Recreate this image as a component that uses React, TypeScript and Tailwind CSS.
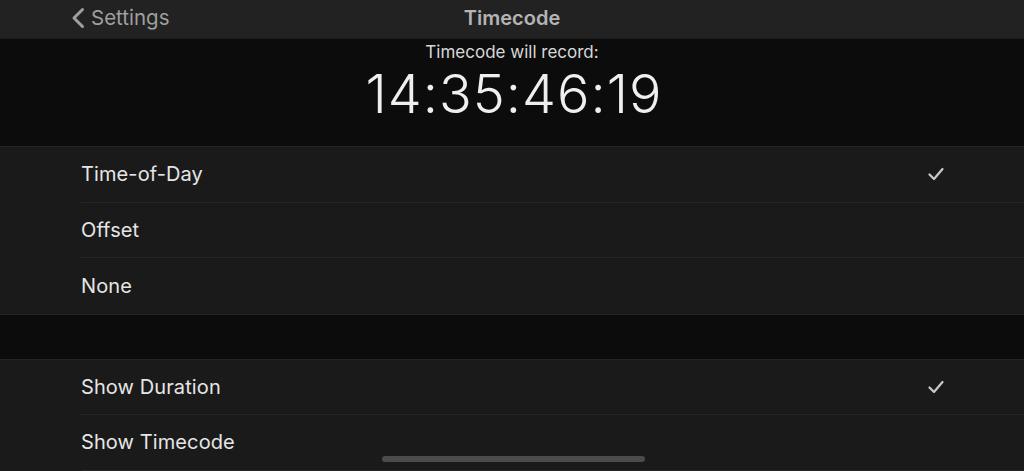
import React from "react";

const font = { fontFamily: "Inter, Roboto, 'Liberation Sans', sans-serif" };

function Check() {
  return (
    <svg width="16" height="14" viewBox="0 0 16 14" fill="none">
      <path d="M1.5 7.5 L6 12 L14.5 2" stroke="#c9c9c9" strokeWidth="2.2" strokeLinecap="round" strokeLinejoin="round" />
    </svg>
  );
}

function Row({ label, checked, last }: { label: string; checked?: boolean; last?: boolean }) {
  return (
    <div className="bg-[#1a1a1a] pl-[81px]">
      <div className={`flex h-[55.5px] items-center pr-[80px] ${last ? "" : "border-b border-[#262626]"}`}>
        <span className="flex-1 text-[20px] text-[#e6e6e6] tracking-[0.1px]">{label}</span>
        {checked && <Check />}
      </div>
    </div>
  );
}

export default function App() {
  return (
    <div style={font} className="relative h-[471px] w-[1024px] overflow-hidden bg-[#0c0c0c]">
      {/* navigation bar */}
      <div className="relative flex h-[39px] items-center border-b border-[#1c1c1c] bg-[#222222]">
        <div className="flex items-center pl-[70px] pb-[2px] text-[#9f9f9f]">
          <svg width="16" height="22" viewBox="0 0 16 22" fill="none">
            <path d="M12.5 2.5 L4 11 L12.5 19.5" stroke="#9f9f9f" strokeWidth="3" strokeLinecap="round" strokeLinejoin="round" />
          </svg>
          <span className="ml-[5px] text-[20.5px]">Settings</span>
        </div>
        <div className="pointer-events-none absolute inset-x-0 pb-[2px] text-center text-[20px] font-semibold text-[#b4b4b4]">
          Timecode
        </div>
      </div>

      {/* current timecode */}
      <div className="flex h-[107px] flex-col items-center bg-[#0c0c0c] pt-[3px]">
        <div className="text-[17px] leading-[20px] text-[#d8d8d8]">Timecode will record:</div>
        <div className="mt-[1px] pl-[4px] text-[54px] font-light leading-[62px] tracking-[1px] text-[#efefef]">
          14:35:46:19
        </div>
      </div>

      {/* source options */}
      <div className="border-t border-[#242424]">
        <Row label="Time-of-Day" checked />
        <Row label="Offset" />
        <Row label="None" last />
      </div>

      <div className="h-[45px] border-t border-[#242424] bg-[#0c0c0c]" />

      {/* display options */}
      <div className="border-t border-[#242424]">
        <Row label="Show Duration" checked />
        <Row label="Show Timecode" />
      </div>

      {/* home indicator */}
      <div className="absolute bottom-[9px] left-[382px] h-[6px] w-[263px] rounded-full bg-[#4b4b4b]" />
    </div>
  );
}
